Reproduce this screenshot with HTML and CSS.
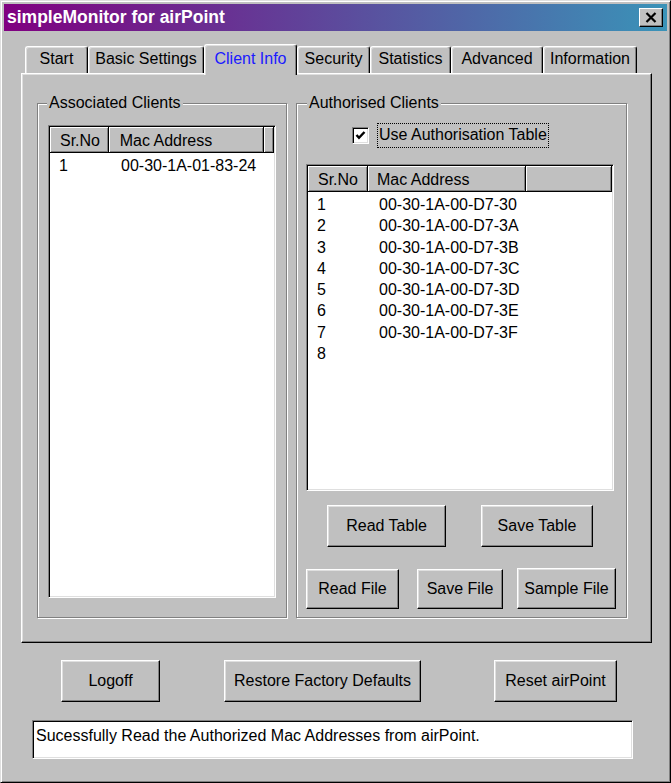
FILE: index.html
```html
<!DOCTYPE html>
<html>
<head lang="en">
    <meta charset="UTF-8">
    <title>simpleMonitor for airPoint</title>
    <link rel="stylesheet" href="styles.css">
</head>
<body>
    <div class="window">
        <div class="titlebar">
            <span class="title">simpleMonitor for airPoint</span>
            <div class="close-btn">
                <svg width="12" height="11" viewBox="0 0 12 11"><path d="M1.5 1 L10.5 10 M10.5 1 L1.5 10" stroke="#000" stroke-width="2.2" fill="none"/></svg>
            </div>
        </div>

        <div class="tabs">
            <div class="tab tab-start">Start</div>
            <div class="tab tab-basic">Basic Settings</div>
            <div class="tab tab-client active">Client Info</div>
            <div class="tab tab-security">Security</div>
            <div class="tab tab-stats">Statistics</div>
            <div class="tab tab-adv">Advanced</div>
            <div class="tab tab-info">Information</div>
        </div>

        <div class="panel">
            <!-- associated clients -->
            <div class="group group-assoc">
                <div class="group-label">Associated Clients</div>
                <div class="listview list-assoc">
                    <div class="lv-head">
                        <div class="hcol c1">Sr.No</div>
                        <div class="hcol c2">Mac Address</div>
                        <div class="hcol c3"></div>
                    </div>
                    <div class="lv-body">
                        <div class="lv-row"><span class="c1">1</span><span class="c2">00-30-1A-01-83-24</span></div>
                    </div>
                </div>
            </div>

            <!-- authorised clients -->
            <div class="group group-auth">
                <div class="group-label">Authorised Clients</div>
                <div class="check-row">
                    <div class="checkbox">
                        <svg width="11" height="11" viewBox="0 0 11 11"><path d="M1.5 5 L4 7.8 L9.5 2" stroke="#000" stroke-width="2.4" fill="none"/></svg>
                    </div>
                    <span class="check-label">Use Authorisation Table</span>
                </div>
                <div class="listview list-auth">
                    <div class="lv-head">
                        <div class="hcol c1">Sr.No</div>
                        <div class="hcol c2">Mac Address</div>
                        <div class="hcol c3"></div>
                    </div>
                    <div class="lv-body">
                        <div class="lv-row"><span class="c1">1</span><span class="c2">00-30-1A-00-D7-30</span></div>
                        <div class="lv-row"><span class="c1">2</span><span class="c2">00-30-1A-00-D7-3A</span></div>
                        <div class="lv-row"><span class="c1">3</span><span class="c2">00-30-1A-00-D7-3B</span></div>
                        <div class="lv-row"><span class="c1">4</span><span class="c2">00-30-1A-00-D7-3C</span></div>
                        <div class="lv-row"><span class="c1">5</span><span class="c2">00-30-1A-00-D7-3D</span></div>
                        <div class="lv-row"><span class="c1">6</span><span class="c2">00-30-1A-00-D7-3E</span></div>
                        <div class="lv-row"><span class="c1">7</span><span class="c2">00-30-1A-00-D7-3F</span></div>
                        <div class="lv-row"><span class="c1">8</span><span class="c2"></span></div>
                    </div>
                </div>
                <div class="btn-row row-table">
                    <div class="btn btn-read-table">Read Table</div>
                    <div class="btn btn-save-table">Save Table</div>
                </div>
                <div class="btn-row row-file">
                    <div class="btn btn-read-file">Read File</div>
                    <div class="btn btn-save-file">Save File</div>
                    <div class="btn btn-sample-file">Sample File</div>
                </div>
            </div>
        </div>

        <div class="actions">
            <div class="btn btn-logoff">Logoff</div>
            <div class="btn btn-restore">Restore Factory Defaults</div>
            <div class="btn btn-reset">Reset airPoint</div>
        </div>

        <div class="status">Sucessfully Read the Authorized Mac Addresses from airPoint.</div>
    </div>
</body>
</html>
```

FILE: styles.css
```css
*{
    margin: 0;
    padding: 0;
    box-sizing: border-box;
}
body{
    font-family: "Liberation Sans", Arial, sans-serif;
    font-size: 16px;
    color: #000;
    background: #c0c0c0;
}
.window{
    width: 671px;
    height: 783px;
    background: #c0c0c0;
    border: 1px solid;
    border-color: #dfdfdf #000 #000 #dfdfdf;
    box-shadow: inset 1px 1px #fff, inset -1px -1px #808080;
    padding: 3px;
}

/* title bar */
.titlebar{
    height: 27px;
    display: flex;
    align-items: center;
    justify-content: space-between;
    padding-left: 3px;
    padding-right: 4px;
    background: linear-gradient(to right, #800080, #3a93b8);
}
.title{
    color: #fff;
    font-weight: bold;
    font-size: 17.5px;
}
.close-btn{
    width: 24px;
    height: 19px;
    display: flex;
    align-items: center;
    justify-content: center;
    background: #c0c0c0;
    border: 1px solid;
    border-color: #fff #000 #000 #fff;
    box-shadow: inset -1px -1px #808080;
}

/* tabs */
.tabs{
    display: flex;
    align-items: flex-end;
    height: 31px;
    margin-top: 11px;
    margin-left: 17px;
    padding-left: 4px;
}
.tab{
    height: 27px;
    display: flex;
    align-items: center;
    justify-content: center;
    background: #c0c0c0;
    border-left: 1px solid #fff;
    border-top: 1px solid #fff;
    border-right: 1px solid #000;
    border-radius: 3px 3px 0 0;
    box-shadow: inset -1px 0 #808080, inset 1px 1px #dfdfdf;
    padding-bottom: 2px;
}
.tab.active{
    height: 31px;
    margin-bottom: -2px;
    padding-bottom: 3px;
    color: #1a1aff;
    position: relative;
    z-index: 1;
}
.tab-start{ width: 63px; }
.tab-basic{ width: 116px; }
.tab-client{ width: 93px; }
.tab-security{ width: 73px; }
.tab-stats{ width: 81px; }
.tab-adv{ width: 92px; }
.tab-info{ width: 94px; }

/* tab page */
.panel{
    width: 631px;
    height: 570px;
    margin-left: 17px;
    border: 1px solid;
    border-color: #fff #000 #000 #fff;
    box-shadow: inset -1px -1px #808080, inset 1px 1px #dfdfdf;
    display: flex;
    align-items: flex-start;
    gap: 9px;
    padding: 29px 0 0 15px;
}

.group{
    height: 515px;
    border: 1px solid #808080;
    box-shadow: inset 1px 1px #fff, 1px 1px #fff;
    display: flex;
    flex-direction: column;
    align-items: flex-start;
}
.group-assoc{ width: 250px; }
.group-auth{ width: 331px; }
.group-label{
    line-height: 18px;
    margin-top: -10px;
    margin-left: 9px;
    padding: 0 2px;
    background: #c0c0c0;
}
.group-auth .group-label{
    margin-left: 10px;
}

/* list view */
.listview{
    background: #fff;
    border: 1px solid;
    border-color: #808080 #fff #fff #808080;
    box-shadow: inset 1px 1px #000, inset -1px -1px #dfdfdf;
    padding: 1px;
    overflow: hidden;
}
.list-assoc{
    width: 228px;
    height: 473px;
    margin-top: 13px;
    margin-left: 10px;
}
.list-auth{
    width: 308px;
    height: 327px;
    margin-top: 16px;
    margin-left: 9px;
}
.lv-head{
    display: flex;
    height: 26px;
}
.hcol{
    height: 26px;
    line-height: 27px;
    background: #c0c0c0;
    border-right: 1px solid #000;
    border-bottom: 1px solid #000;
    box-shadow: inset 1px 1px #fff, inset -1px -1px #808080;
    padding-left: 9px;
    white-space: nowrap;
}
.hcol.c3{
    flex: 1;
}
.hcol.c1{ width: 60px; }
.list-assoc .hcol.c2{ width: 159px; padding-left: 11px; }
.list-auth .hcol.c2{ width: 158px; }
.hcol.c1{ padding-left: 10px; }

.lv-body{
    padding-top: 2px;
}
.list-auth .lv-body{
    padding-top: 2px;
}
.lv-row{
    display: flex;
    height: 21.3px;
    line-height: 21.3px;
}
.lv-row .c1{
    width: 60px;
    padding-left: 9px;
}
.lv-row .c2{
    padding-left: 11px;
}

/* checkbox */
.check-row{
    display: flex;
    align-items: center;
    height: 26px;
    margin-top: 10px;
    margin-left: 55px;
}
.checkbox{
    width: 17px;
    height: 17px;
    background: #fff;
    border: 1px solid;
    border-color: #808080 #fff #fff #808080;
    box-shadow: inset 1px 1px #000, inset -1px -1px #dfdfdf;
    display: flex;
    align-items: center;
    justify-content: center;
}
.check-label{
    margin-left: 8px;
    border: 1px dotted #000;
    padding: 1px 1px 2px 1px;
    line-height: 20px;
}

/* buttons */
.btn{
    display: flex;
    align-items: center;
    justify-content: center;
    background: #c0c0c0;
    border: 1px solid;
    border-color: #fff #000 #000 #fff;
    box-shadow: inset -1px -1px #808080, inset 1px 1px #dfdfdf;
    white-space: nowrap;
}
.btn-row{
    display: flex;
    align-items: flex-start;
}
.row-table{
    margin-top: 14px;
}
.row-table .btn{
    height: 42px;
}
.btn-read-table{ width: 119px; margin-left: 30px; }
.btn-save-table{ width: 112px; margin-left: 35px; }
.row-file{
    margin-top: 22px;
}
.row-file .btn{
    height: 40px;
}
.btn-read-file{ width: 93px; margin-left: 9px; }
.btn-save-file{ width: 86px; margin-left: 18px; }
.btn-sample-file{ width: 99px; margin-left: 14px; height: 41px !important; margin-top: -1px; }

.actions{
    display: flex;
    margin-top: 17px;
}
.actions .btn{
    height: 42px;
}
.btn-logoff{ width: 99px; margin-left: 57px; }
.btn-restore{ width: 197px; margin-left: 64px; }
.btn-reset{ width: 123px; margin-left: 73px; }

/* status line */
.status{
    width: 601px;
    height: 39px;
    margin-top: 18px;
    margin-left: 28px;
    background: #fff;
    border: 1px solid;
    border-color: #808080 #fff #fff #808080;
    box-shadow: inset 1px 1px #000, inset -1px -1px #dfdfdf;
    padding: 0 3px;
    display: flex;
    align-items: center;
    padding-bottom: 7px;
    white-space: nowrap;
}
```
